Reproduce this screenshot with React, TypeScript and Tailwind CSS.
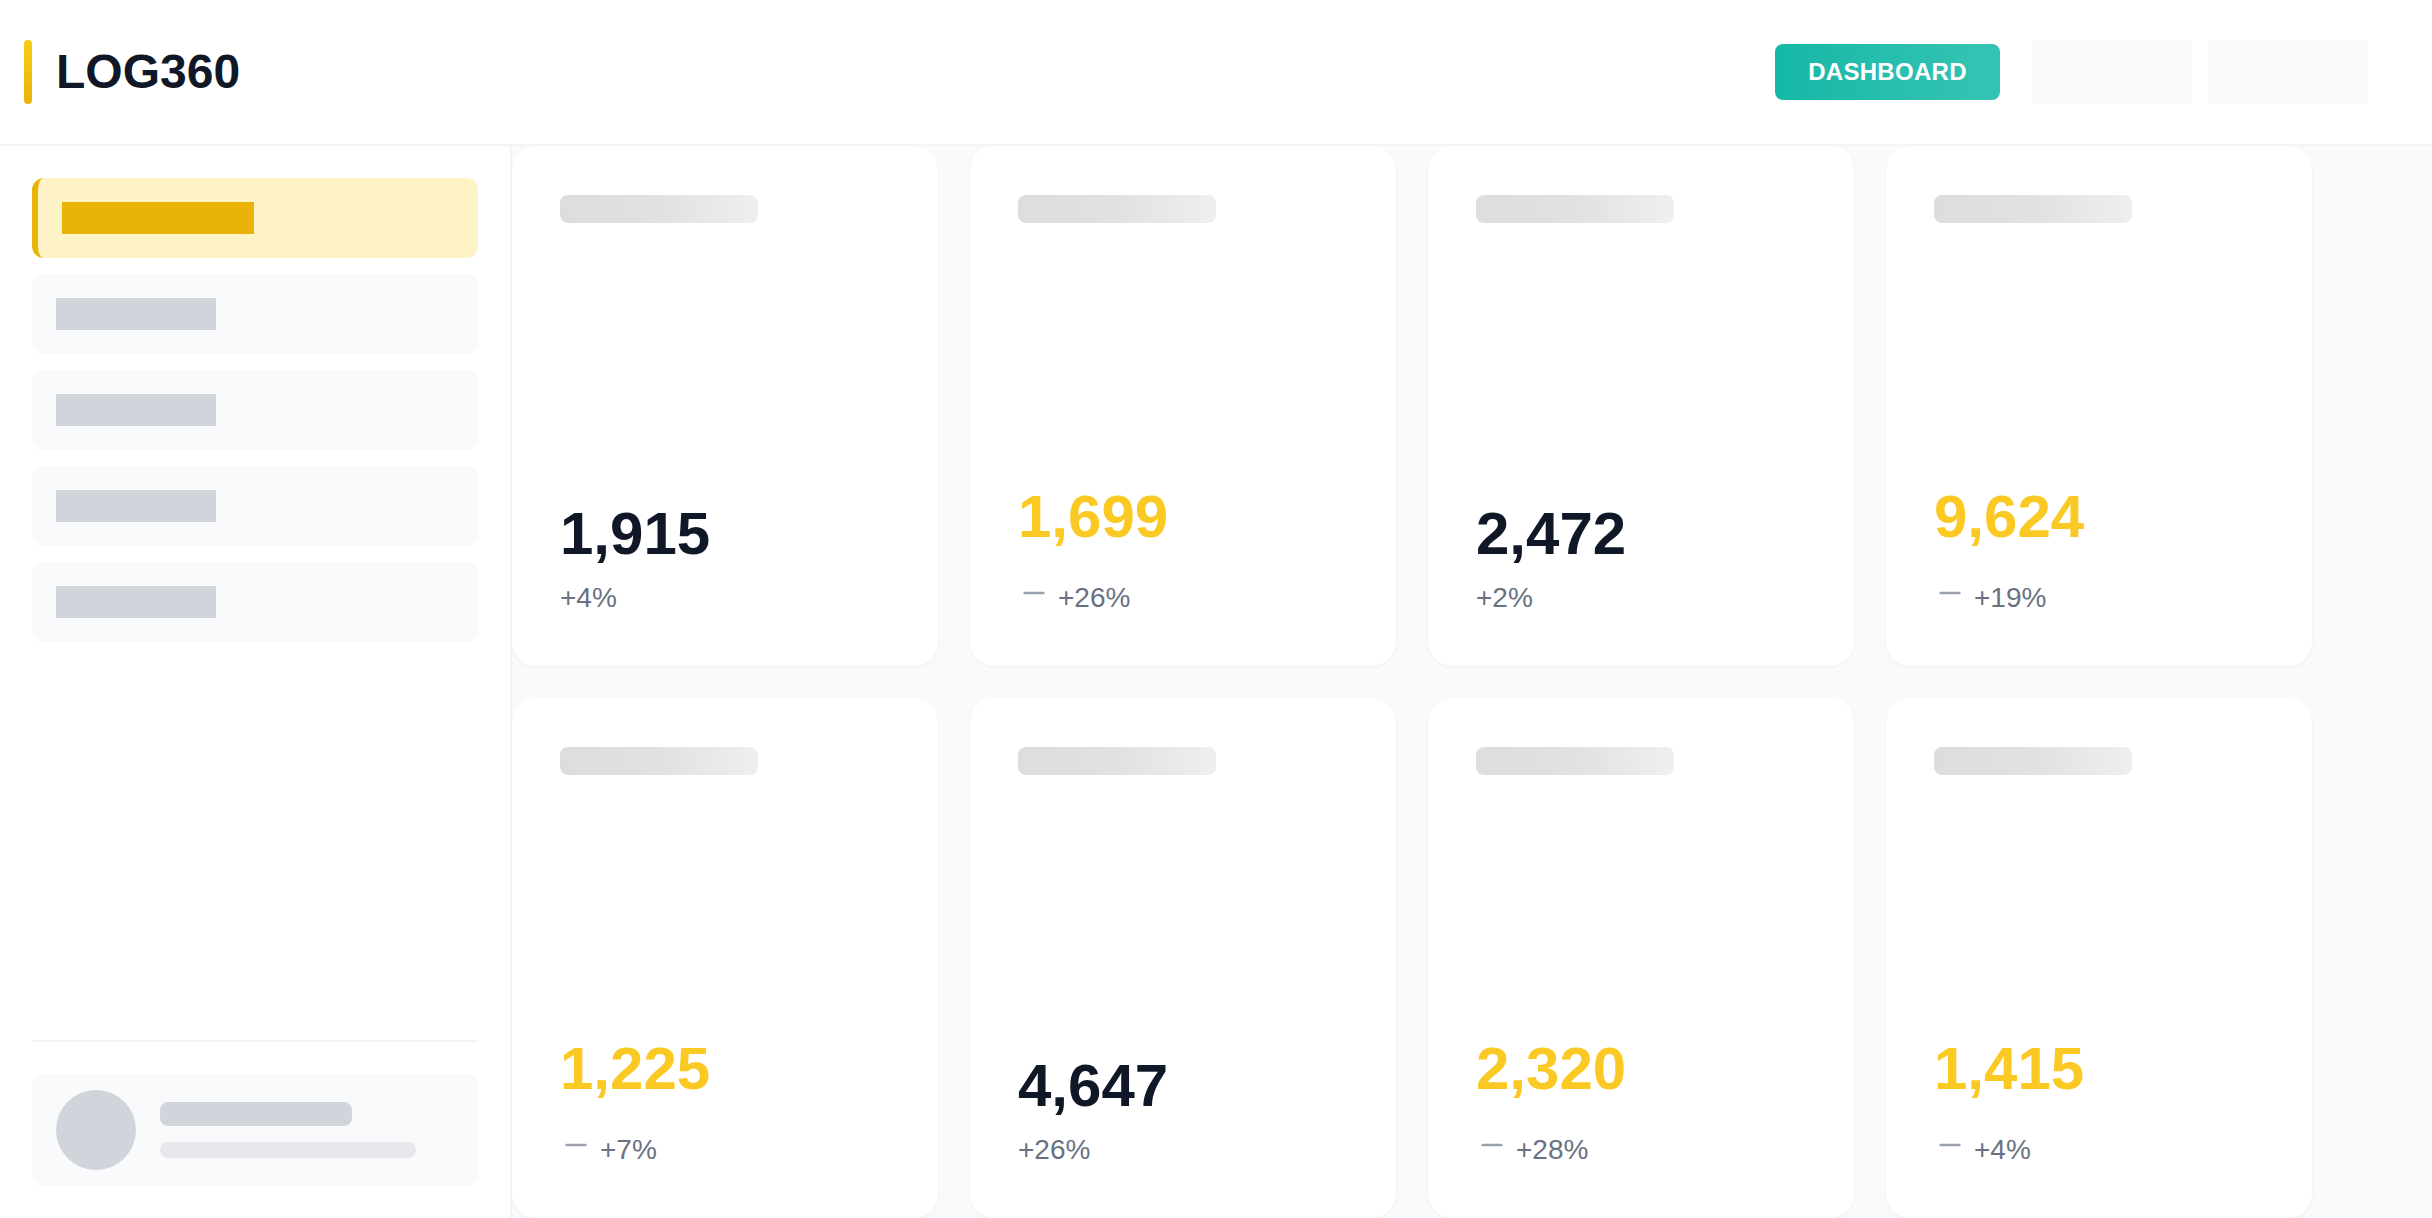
import React from 'react';
import { Minus } from 'lucide-react';

interface Stat {
  value: string;
  change: string;
  highlight: boolean;
}

const stats: Stat[] = [
  { value: '1,915', change: '+4%', highlight: false },
  { value: '1,699', change: '+26%', highlight: true },
  { value: '2,472', change: '+2%', highlight: false },
  { value: '9,624', change: '+19%', highlight: true },
  { value: '1,225', change: '+7%', highlight: true },
  { value: '4,647', change: '+26%', highlight: false },
  { value: '2,320', change: '+28%', highlight: true },
  { value: '1,415', change: '+4%', highlight: true },
];

const StatCard: React.FC<{ stat: Stat }> = ({ stat }) => (
  <div className="h-[520px] rounded-3xl bg-white px-12 pt-[49px] pb-[50px] flex flex-col shadow-[0_1px_3px_rgba(0,0,0,0.05)]">
    <div className="h-7 w-[198px] rounded-lg bg-gradient-to-r from-[#dddddd] via-[#e1e1e1] to-[#efefef]" />
    <div className="flex-1" />
    <p
      className={
        stat.highlight
          ? 'text-6xl leading-none font-bold text-[#fbc923]'
          : 'text-6xl leading-none font-bold text-gray-900'
      }
    >
      {stat.value}
    </p>
    {stat.highlight ? (
      <div className="mt-[33px] flex items-center gap-2 text-[28px] leading-9 text-gray-500">
        <Minus className="w-8 h-8 text-gray-400 relative -top-[5px]" strokeWidth={2} />
        <span>{stat.change}</span>
      </div>
    ) : (
      <div className="mt-[16px] text-[28px] leading-9 text-gray-500">{stat.change}</div>
    )}
  </div>
);

export default function App() {
  return (
    <div className="h-screen flex flex-col bg-white overflow-hidden font-['Liberation_Sans',Arial,sans-serif]">
      <header className="h-[146px] shrink-0 flex items-center justify-between pl-6 pr-16 border-b-2 border-gray-100 bg-white">
        <div className="flex items-center gap-6">
          <div className="w-2 h-16 rounded-full bg-gradient-to-b from-[#facc15] to-[#eab308]" />
          <h1 className="text-5xl leading-none font-bold text-gray-900">LOG360</h1>
        </div>
        <div className="flex items-center">
          <button className="w-[225px] h-14 rounded-lg bg-gradient-to-r from-[#14b8a6] to-[#35c4b4] text-white text-2xl font-bold tracking-[0.3px] uppercase flex items-center justify-center">
            Dashboard
          </button>
          <div className="ml-8 w-40 h-16 bg-gray-50" />
          <div className="ml-4 w-40 h-16 bg-gray-50" />
        </div>
      </header>

      <div className="flex-1 flex min-h-0">
        <aside className="w-[512px] shrink-0 border-r-2 border-gray-100 bg-white flex flex-col px-8 pt-8 pb-8">
          <nav className="flex flex-col gap-4">
            <div className="rounded-xl bg-[#fef3c7] border-l-[6px] border-[#eab308] px-6 py-6">
              <div className="w-48 h-8 bg-[#eab308]" />
            </div>
            {[0, 1, 2, 3].map((i) => (
              <div key={i} className="rounded-xl bg-gray-50 px-6 py-6">
                <div className="w-40 h-8 bg-[#d1d5db]" />
              </div>
            ))}
          </nav>
          <div className="flex-1" />
          <div className="border-t-2 border-gray-100 pt-8">
            <div className="rounded-xl bg-gray-50 px-6 py-4 flex items-center gap-6">
              <div className="w-20 h-20 rounded-full bg-[#d1d5db]" />
              <div className="flex flex-col gap-4">
                <div className="w-48 h-6 rounded-lg bg-[#d1d5db]" />
                <div className="w-64 h-4 rounded-full bg-[#e5e7eb]" />
              </div>
            </div>
          </div>
        </aside>

        <main className="flex-1 bg-gray-50 overflow-hidden">
          <div className="grid grid-cols-[repeat(4,426px)] gap-8">
            {stats.map((s, i) => (
              <StatCard key={i} stat={s} />
            ))}
          </div>
        </main>
      </div>
    </div>
  );
}
